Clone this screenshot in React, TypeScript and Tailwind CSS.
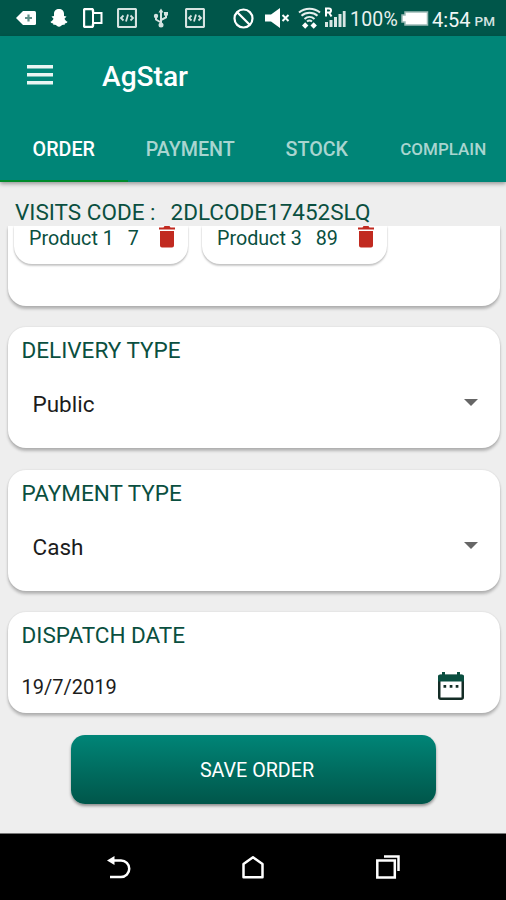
import type { ReactNode } from "react";

const tabs = [
  { label: "ORDER", className: "text-[19.7px] text-white" },
  { label: "PAYMENT", className: "text-[19.7px] text-[#a9d5d0]" },
  { label: "STOCK", className: "text-[19.7px] text-[#a9d5d0]" },
  { label: "COMPLAIN", className: "text-[17px] text-[#a9d5d0]" },
];

const products = [
  { name: "Product 1", qty: "7", className: "w-[174px]" },
  { name: "Product 3", qty: "89", className: "w-[185px]" },
];

function CodeIcon() {
  return (
    <svg width="20" height="20" viewBox="0 0 20 20" fill="none" stroke="#d5e3e1">
      <rect x="1" y="1" width="18" height="18" rx="1" strokeWidth="2.2" />
      <path d="M6.5 7.5 4 10l2.5 2.500M13.500 7.500 16 10l-2.500 2.500M11 6.500l-2 7" strokeWidth="1.8" />
    </svg>
  );
}

function StatusBar() {
  return (
    <div className="flex h-9 items-center bg-[#00564a] pl-4 text-white">
      <svg width="20" height="20" viewBox="0 0 20 20">
        <path d="M7 3h11.5a1.5 1.5 0 0 1 1.5 1.5v11a1.5 1.5 0 0 1-1.5 1.5H7L0 10z" fill="#fff" />
        <path d="M12.5 6.5v7M9 10h7" stroke="#5f8f88" strokeWidth="2.2" />
      </svg>
      <svg className="ml-[13px]" width="20" height="20" viewBox="0 0 20 20" fill="#fff">
        <path d="M10 1c3 0 5 2 5 4.800v2.200l2.500.5-2 2.300c.7 1.500 1.500 2.400 3 2.900-.3 1.300-1.500 1.600-2.600 1.800l-.5 1.500c-1.500-.3-2.400-.1-3.200.7-1.400 1.300-3 1.300-4.400 0-.8-.8-1.700-1-3.200-.7l-.5-1.500c-1.100-.2-2.300-.5-2.600-1.800 1.500-.5 2.300-1.400 3-2.900l-2-2.300L5 8V5.800C5 3 7 1 10 1z" />
      </svg>
      <svg className="ml-[14px]" width="20" height="20" viewBox="0 0 20 20" fill="none" stroke="#fff">
        <path d="M10 4V2.500A1.500 1.500 0 0 0 8.500 1h-6A1.500 1.500 0 0 0 1 2.500v15A1.500 1.500 0 0 0 2.500 19h6a1.500 1.500 0 0 0 1.500-1.500V16" strokeWidth="2.4" />
        <path d="M10 5v10h8.500V5z" strokeWidth="2" />
      </svg>
      <div className="ml-[14px]"><CodeIcon /></div>
      <svg className="ml-[16px]" width="16" height="20" viewBox="0 0 16 20" fill="none" stroke="#d5e3e1" strokeWidth="2">
        <path d="M8 3v14M8 14.500 3 11.500V8M8 12l5-2.500V6" />
        <path d="M8 .5 10.500 4.500h-5zM11 4h4v3.500h-4z" fill="#d5e3e1" stroke="none" />
        <circle cx="3" cy="8" r="2.200" fill="#d5e3e1" stroke="none" />
        <circle cx="8" cy="17" r="2.500" fill="#d5e3e1" stroke="none" />
      </svg>
      <div className="ml-[16px]"><CodeIcon /></div>
      <svg className="ml-[28px]" width="21" height="21" viewBox="0 0 21 21" fill="none" stroke="#fff" strokeWidth="2.2">
        <circle cx="10.5" cy="10.5" r="9" />
        <path d="m4 4 13 13" />
      </svg>
      <svg className="ml-[11px]" width="25" height="20" viewBox="0 0 25 20">
        <path d="M0 6.500h6L15 0v20l-9-6.500H0z" fill="#fff" />
        <path d="m17.500 7 6 6m0-6-6 6" stroke="#fff" strokeWidth="2" />
      </svg>
      <svg className="ml-[8px]" width="23" height="22" viewBox="0 0 23 22" fill="none" stroke="#e5efed" strokeWidth="2">
        <path d="M1 5.500c6-5 15-5 21 0M3.500 8.800c4.500-4 11.500-4 16 0M6.500 12c3-2.600 7-2.600 10 0M9 14.500c1.500-1.200 3.500-1.200 5 0" />
        <path d="m4 18.500 3.200-3.200 3.200 3.200-3.200 3.200zM12.500 18.500l3.200-3.200 3.200 3.200-3.200 3.200z" fill="#fff" stroke="none" />
      </svg>
      <svg className="ml-[3px]" width="22" height="22" viewBox="0 0 22 22" fill="#d9e6e4">
        <path d="M2 9.500V1.500h3a2 2 0 0 1 0 4H2M5 5.500l2.500 4" fill="none" stroke="#fff" strokeWidth="2" />
        <path d="M1 15h3v5H1zM5.500 13h3v7h-3zM10 10h3v10h-3zM14.500 7h3v13h-3zM18.800 4h2.800v16h-2.800z" />
      </svg>
      <span className="ml-[4px] w-[50px] pt-[3px] text-[19.5px] tracking-[0.2px] text-[#e8f1ef]">100%</span>
      <svg className="ml-[1px]" width="28" height="15" viewBox="0 0 28 15">
        <path d="M4 1h22.500v13H4v-3H1V4h3z" fill="#fff" stroke="#9dbbb6" strokeWidth="1.500" />
      </svg>
      <span className="ml-[3px] pt-[3px] text-[20px] text-[#f0f6f5]">4:54</span>
      <span className="ml-[4px] pt-[7px] text-[13.5px] font-medium text-[#d5e3e1]">PM</span>
    </div>
  );
}

function Card({ title, className, children }: { title: string; className: string; children: ReactNode }) {
  return (
    <section className={`rounded-[18px] bg-white shadow-[0_3px_3px_rgba(0,0,0,0.24),0_0_2px_rgba(0,0,0,0.12)] ${className}`}>
      <h2 className="pt-[9px] pl-[14px] text-[22.5px] leading-[28px] text-[#0a4f40]">{title}</h2>
      {children}
    </section>
  );
}

function Spinner({ value }: { value: string }) {
  return (
    <div className="mt-[26px] flex items-center justify-between pr-[22px] pl-[25px]">
      <span className="text-[22.5px] leading-[28px] text-[#1c1c1c]">{value}</span>
      <svg className="mb-[3px]" width="14" height="7" viewBox="0 0 14 7">
        <path d="M0 0h14L7 7z" fill="#666" />
      </svg>
    </div>
  );
}

export default function App() {
  return (
    <div className="flex h-[900px] w-[506px] flex-col overflow-hidden bg-[#eeeeee] font-['Roboto',sans-serif]">
      <StatusBar />

      <header className="relative z-10 flex h-[146px] flex-col bg-[#008577] shadow-[0_2px_4px_rgba(0,0,0,0.35)]">
        <div className="flex h-[79px] items-center pl-[27px]">
          <svg className="mb-[2px]" width="26" height="20" viewBox="0 0 26 20" fill="#e9f5f3">
            <path d="M0 0h26v3.500H0zM0 8h26v3.500H0zM0 16h26v3.500H0z" />
          </svg>
          <h1 className="ml-[49px] pt-[3px] text-[28.1px] font-medium text-white">AgStar</h1>
        </div>
        <nav className="grid flex-1 grid-cols-4">
          {tabs.map((tab) => (
            <div key={tab.label} className={`flex items-center justify-center pt-[5px] pl-[1px] font-medium ${tab.className}`}>
              {tab.label}
            </div>
          ))}
        </nav>
        <div className="h-[2px] w-[128px] bg-[#008a2c]" />
      </header>

      <div className="flex h-[44px] shrink-0 items-end gap-[15px] pl-[15px] text-[22.5px] leading-[28px] whitespace-nowrap text-[#0a4f40]">
        <span>VISITS CODE :</span>
        <span>2DLCODE17452SLQ</span>
      </div>

      <main className="flex h-[607px] flex-col overflow-hidden pr-[6px] pl-[7.5px]">
        {/* Selected products, scrolled partly under the visit code */}
        <section className="h-[80px] shrink-0 rounded-b-[18px] bg-white px-[6.5px] shadow-[0_3px_3px_rgba(0,0,0,0.24),0_0_2px_rgba(0,0,0,0.12)]">
          <div className="flex gap-[14px]">
            {products.map((product) => (
              <div
                key={product.name}
                className={`flex h-[38px] rounded-b-[18px] bg-white pr-[12px] pl-[15px] text-[19.7px] leading-[25px] text-[#0a4f40] shadow-[0_2px_2px_rgba(0,0,0,0.2),0_0_2px_rgba(0,0,0,0.14)] ${product.className}`}
              >
                <span>{product.name}</span>
                <span className="ml-[14px]">{product.qty}</span>
                <svg className="ml-auto" width="18" height="22" viewBox="0 0 18 22" fill="#c12a20">
                  <path d="M1 1.500h4.500L6.500 0h5l1 1.500H17v2H1zM2 5h14v14.500a2 2 0 0 1-2 2H4a2 2 0 0 1-2-2z" />
                </svg>
              </div>
            ))}
          </div>
        </section>

        <Card title="DELIVERY TYPE" className="mt-[21px] h-[121px] shrink-0">
          <Spinner value="Public" />
        </Card>
        <Card title="PAYMENT TYPE" className="mt-[22px] h-[121px] shrink-0">
          <Spinner value="Cash" />
        </Card>
        <Card title="DISPATCH DATE" className="mt-[21px] h-[101px] shrink-0">
          <div className="mt-[22px] flex items-center justify-between pr-[36.5px] pl-[14px]">
            <span className="pt-[2px] text-[20px] leading-[28px] text-[#1c1c1c]">19/7/2019</span>
            <svg width="26" height="28" viewBox="0 0 26 28">
              <rect x="1.25" y="4" width="23.5" height="22.7" rx="1.5" fill="none" stroke="#142c26" strokeWidth="2.5" />
              <path d="M0 9.500V4.500A2 2 0 0 1 2 2.500h2V0h3v2.500h12V0h3v2.500h2a2 2 0 0 1 2 2v5z" fill="#0a4f40" />
              <path d="M5.500 13h2.700v2.700H5.500zM11.700 13h2.700v2.700h-2.700zM17.700 13h2.700v2.700h-2.700z" fill="#142c26" />
            </svg>
          </div>
        </Card>

        <button className="mt-[22px] ml-[63.5px] h-[69px] w-[365px] shrink-0 rounded-[14px] bg-linear-to-b from-[#008577] to-[#00564a] pt-[3px] pl-[7px] text-[19.7px] text-white shadow-[0_2px_3px_rgba(0,0,0,0.4)]">
          SAVE ORDER
        </button>
      </main>

      <footer className="flex h-[67px] shrink-0 items-center border-t border-[#777] bg-black pl-[107px]">
        <svg width="24" height="24" viewBox="0 0 24 24" fill="none" stroke="#fff" strokeWidth="2.500">
          <path d="M5 5.500h9a8 8 0 0 1 0 16.500H3" />
          <path d="M0 5.500 7.500 1v9z" fill="#fff" stroke="none" />
        </svg>
        <svg className="ml-[111px]" width="22" height="24" viewBox="0 0 22 24" fill="none" stroke="#fff" strokeWidth="2.500">
          <path d="M1.500 9 11 2.300 20.500 9v13.200h-19z" strokeLinejoin="round" />
        </svg>
        <svg className="ml-[112px]" width="24" height="24" viewBox="0 0 24 24" fill="none" stroke="#fff" strokeWidth="2.500">
          <path d="M1.300 5.500h17.500v17H1.300z" />
          <path d="M8 1.500h14.500V16" />
        </svg>
      </footer>
    </div>
  );
}
